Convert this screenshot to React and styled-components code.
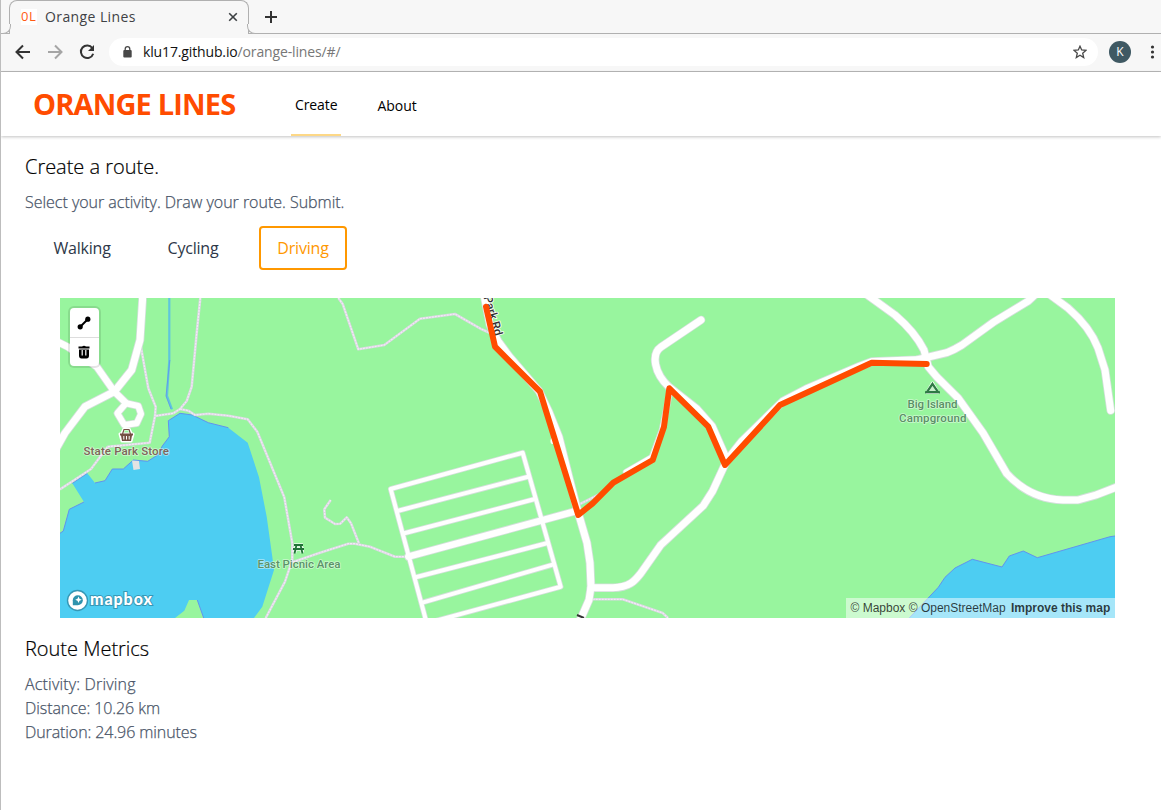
import React from "react";
import styled, { createGlobalStyle, css } from "styled-components";

const GlobalStyle = createGlobalStyle`
  * { box-sizing: border-box; }
  html, body { margin: 0; padding: 0; background: #fff; }
  body { font-family: "Open Sans", "Noto Sans", sans-serif; overflow: hidden; }
  h2, p { margin: 0; }
`;

const Window = styled.div`
  width: 1161px;
  height: 810px;
  border-left: 1px solid #bdbdbd;
  background: #fff;
  overflow: hidden;
`;

const TabStrip = styled.div`
  height: 34px;
  display: flex;
  padding-left: 8px;
  background: #f7f7f7;
  box-shadow: inset 0 -1px 0 #b0b0b0;
`;

const Tab = styled.div`
  position: relative;
  width: 240px;
  height: 34px;
  padding: 0 10px 1px 11px;
  display: flex;
  align-items: center;
  border: 1px solid #b0b0b0;
  border-bottom: 0;
  border-radius: 8px 8px 0 0;
  background: #f7f7f7;

  &::before,
  &::after {
    content: "";
    position: absolute;
    bottom: 0;
    width: 8px;
    height: 9px;
    border: 0 solid #b0b0b0;
    border-bottom-width: 1px;
    background: #f7f7f7;
  }
  &::before {
    left: -8px;
    border-right-width: 1px;
    border-bottom-right-radius: 8px;
  }
  &::after {
    right: -8px;
    border-left-width: 1px;
    border-bottom-left-radius: 8px;
  }
`;

const Favicon = styled.span`
  width: 16px;
  height: 16px;
  background: #fff;
  color: #ff5a14;
  font-size: 13px;
  line-height: 15px;
  letter-spacing: 0.6px;
`;

const TabTitle = styled.span`
  flex: 1;
  margin-left: 8px;
  padding-bottom: 2px;
  font-size: 14px;
  letter-spacing: 0.4px;
  color: #3f4245;
`;

const NewTab = styled.div`
  display: flex;
  align-items: center;
  margin-left: 15px;
`;

const Toolbar = styled.div`
  height: 38px;
  display: flex;
  align-items: center;
  padding: 0 0 1px 14px;
  background: #f7f7f7;
  border-bottom: 1px solid #b9b9b9;
`;

const NavIcon = styled.svg`
  width: 16px;
  height: 16px;
  margin-right: 16px;
  flex: none;
`;

const AddressBar = styled.div`
  width: 989px;
  height: 28px;
  margin-left: -2px;
  padding: 0 11px 0 14px;
  display: flex;
  align-items: center;
  border-radius: 14px;
  background: #fff;
`;

const Url = styled.span`
  flex: 1;
  margin-left: 11px;
  padding-bottom: 2px;
  font-size: 14px;
  letter-spacing: -0.14px;
  color: #111;
  span { color: #777; }
`;

const Avatar = styled.div`
  width: 22px;
  height: 22px;
  margin: 0 18px 0 11px;
  border-radius: 50%;
  background: #3f5963;
  color: #fff;
  font-size: 12px;
  line-height: 22px;
  text-align: center;
`;

const Header = styled.header`
  height: 64px;
  display: flex;
  padding-left: 32px;
  background: #fff;
  box-shadow: 0 1px 3px rgba(0, 0, 0, 0.24);
`;

const Brand = styled.div`
  width: 258px;
  font-size: 29px;
  font-weight: 700;
  line-height: 64px;
  letter-spacing: -0.84px;
  color: #ff4c00;
`;

const NavLink = styled.a`
  height: 64px;
  padding: 0 4px;
  margin-right: 32px;
  line-height: ${(p) => (p.$active ? 66 : 68)}px;
  font-size: 14px;
  letter-spacing: ${(p) => (p.$active ? "-0.1px" : "-0.05px")};
  color: #000;
  border-bottom: 2px solid ${(p) => (p.$active ? "#fdd887" : "transparent")};
`;

const Page = styled.main`
  padding: 15px 24px 0;
`;

const Heading = styled.h2`
  margin-bottom: 7px;
  font-size: 20px;
  font-weight: 300;
  line-height: 32px;
  letter-spacing: -0.02px;
  -webkit-text-stroke: 0.2px currentColor;
  color: #000;
`;

const Text = styled.p`
  font-size: 16px;
  font-weight: 300;
  line-height: 24px;
  letter-spacing: ${(p) => p.$tracking}px;
  -webkit-text-stroke: 0.25px currentColor;
  color: #4a5568;
`;

const Activities = styled.div`
  display: flex;
  gap: 26px;
  margin: 12px 0 28px 10px;
`;

const Activity = styled.button`
  width: ${(p) => p.$width}px;
  height: 44px;
  padding: 0;
  border: 2px solid transparent;
  border-radius: 4px;
  background: none;
  font: 400 16px "Open Sans", "Noto Sans", sans-serif;
  letter-spacing: -0.2px;
  color: #2d3748;
  ${(p) =>
    p.$selected &&
    css`
      margin-left: 2px;
      border-color: #ff9800;
      color: #ff9800;
    `}
`;

const MapFrame = styled.div`
  position: relative;
  width: 1055px;
  height: 320px;
  margin: 0 0 15px 35px;
  overflow: hidden;
`;

const MapCanvas = styled.svg`
  display: block;
  width: 1055px;
  height: 320px;
`;

const Controls = styled.div`
  position: absolute;
  left: 10px;
  top: 10px;
  width: 29px;
  border-radius: 4px;
  background: #fff;
  box-shadow: 0 0 0 2px rgba(0, 0, 0, 0.1);
`;

const Control = styled.div`
  height: 29px;
  padding-right: 1px;
  display: flex;
  align-items: center;
  justify-content: center;
  & + & { border-top: 1px solid #ddd; }
`;

const Attribution = styled.div`
  position: absolute;
  right: 0;
  bottom: 0;
  width: 269px;
  height: 20px;
  padding-left: 4.5px;
  background: rgba(255, 255, 255, 0.5);
  font: 12px/20px "Liberation Sans", Arial, sans-serif;
  color: rgba(0, 0, 0, 0.75);
  white-space: nowrap;
  b { margin-left: 2px; }
`;

const ROADS = [
  ["M142.5 290V300L140 340L131.7 370L114.3 391.7L85 406.7L65 433L56 449", 7],
  ["M52 339L68 347L96.7 366.7L114.3 391.7L126 403", 6.5],
  ["M126 403.3L138.3 406L141 414L136.7 423.3L124.3 425L117.3 413.3Z", 6],
  ["M428 628L390.7 489L522.7 452.7L560.7 586.7L424 624", 4],
  ["M398.3 510.7L528.3 476.7M404.3 533.3L534 499.3M415.7 577.3L546.7 543.3M423.3 602.3L552.7 564.7", 4],
  ["M408.3 556.7L578 510.5", 6.5],
  ["M483 290L490 325L498 341L509 356L539 391L549 412L559 437L569 477L578 512L587 543L590 563L591 587L589 600L582 616L578 624", 7],
  ["M591 587.7H613C631 587.5 636 579 641 573L660.7 545L703.3 505.7L712.3 491.7L727 460", 7],
  ["M701 320L661 347C651 354 654 373 669 387L697 409L712 426L727 460L742 441L783 401L806 389L860 366L872 361.5L916.7 359.8L946.7 352.7Q954 350 962 345L993.3 322.3L1028.3 301L1038 292", 7],
  ["M670 391L662 430L652 457L626 472", 5],
  ["M866 294L895 315Q915 332 924 350L928.3 366.7L936.7 376.7L958.3 398.3L983.3 433.3L1006.7 473.5Q1030 499 1063 500H1078L1096 495L1118 486.5", 7],
  ["M1049 294L1068.3 308.3Q1090 327 1098 348L1105 370L1110.7 410.5", 7],
];

const PATHS = [
  "M200.3 298L196.7 333L191.7 386.7L186.7 401L180 409L173.3 413.3L155 416",
  "M180 409L188.3 410.7L195 415L208.3 413.7L228.3 415.7L247.7 419.3L257.3 431.7L284.3 497.3L292.3 543.3V560L285 581.7L265.7 618",
  "M141 347.3L148.3 388.3L155.7 406.7L155 416L149.7 442.7L107.7 446.7L91 469L74.3 480L60 489.3",
  "M293 562L320 552.7L348.3 543.7H355L370 546.7L395 556.7H408",
  "M330.7 500L324.3 509.3L325 517.7L335 524L340.3 523.7L346.7 517.3L351 523.3L359 543.5",
  "M338.3 298L342.7 304L358.3 349.3L384.3 345L420 318.7L455 314L481.7 329.3L490 333",
  "M592.7 599.3H622.7L662.7 613L668 618",
  "M578 505L602 493",
];

const ROUTE =
  "M486 306.7L495 346.7L540 391.7L578.3 515L592.7 503.3L613.3 482.7L652.7 460L664 426.7L669.3 388.3L708.3 426.7L725 465L780 405L871.7 362.7L926.7 364";

const Label = styled.text`
  font-family: Roboto, sans-serif;
  font-size: ${(p) => p.$size || 11.5}px;
  font-weight: 500;
  fill: ${(p) => p.$color};
  stroke: ${(p) => p.$halo || "rgba(255,255,255,0.5)"};
  stroke-width: 1.6px;
  stroke-linejoin: round;
  paint-order: stroke;
`;

function RouteMap() {
  return (
    <MapCanvas viewBox="60 298 1055 320">
      <rect x="60" y="298" width="1055" height="320" fill="#98f59e" />
      <path
        fill="#4dcdf2"
        d="M180 413.3L168.3 420.7L169.3 436.7L162.3 446L157.7 455L147.7 461.3L133.3 460L123.3 469H112.3L105 480.7L95 483L87.3 473.3L72.3 483.3L84 502L69.3 509.3L63.3 531L60 533.3V618H175L184.3 610.7L189 600H197.3L203.7 618H254L262.3 606.7L274 570L272.3 556.7L266.7 516.7L259 477.3L247.7 442.7L228.3 427.7L208.3 422.7L192.3 415Z"
      />
      <path
        fill="#4dcdf2"
        d="M909.3 618L938.3 587.3L945 577.3L955 568L972.3 559.3L1002 567L1009.3 556L1023.3 551L1037.3 557.7L1110 536.7L1115 536V618Z"
      />
      <path
        fill="none"
        stroke="#6193ee"
        d="M228.3 427.7L208.3 422.7L192.3 415L180 413.3L168.3 420.7L169.3 436.7L162.3 446L157.7 455L147.7 461.3L133.3 460L123.3 469H112.3L105 480.7L95 483M87.3 473.3L72.3 483.3M84 502L69.3 509.3L63.3 531L60 533.3M197.3 600L203.7 618M909.3 618L938.3 587.3L945 577.3L955 568L972.3 559.3L1002 567L1009.3 556L1023.3 551L1037.3 557.7L1110 536.7L1115 536"
      />
      <g fill="none">
        <path d="M169.3 298V360L167 396L172 409.3" stroke="#5fc6dc" strokeWidth="2.2" />
        <path d="M169.8 360L166 396L171 409" stroke="#6193ee" strokeWidth="0.8" />
        {PATHS.map((d) => (
          <path key={d} d={d} stroke="#dad7e2" strokeWidth="2.6" strokeLinejoin="round" />
        ))}
        {PATHS.map((d) => (
          <path key={d} d={d} stroke="#f3ecf6" strokeWidth="1.2" strokeDasharray="2 1" />
        ))}
        <g strokeLinecap="round" strokeLinejoin="round">
          {ROADS.map(([d, w]) => (
            <path key={d} d={d} stroke="#d3dfda" strokeWidth={w + 1.6} />
          ))}
          {ROADS.map(([d, w]) => (
            <path key={d} d={d} stroke="#fff" strokeWidth={w} />
          ))}
          <path d="M552.5 440V442" stroke="#fff" strokeWidth="4" />
        </g>
      </g>
      <path d="M132 460.5L139 461L140 469L133.5 470Z" fill="#e3e3e3" />
      <Label $size={12} $color="#333" $halo="#fff" textLength="41" transform="translate(483.5 297) rotate(74)">
        Park Rd
      </Label>
      <path d="M577 615L584 618" stroke="#333" strokeWidth="2" />
      <path d={ROUTE} fill="none" stroke="#ff4c00" strokeWidth="6" strokeLinecap="round" strokeLinejoin="round" />

      <g fill="none" stroke="#fff" strokeWidth="3" strokeLinejoin="round">
        <path d="M120 434H133L131 441H122ZM122 433L124 429H129L131 433" />
        <path d="M927 392.5L932.5 383L938 392.5Z" />
      </g>
      <path d="M122.5 434L124 429.5H129L130.5 434" fill="none" stroke="#745044" strokeWidth="1.2" />
      <path d="M120 433.5H133V435.5H132L131 441H122L121 435.5H120Z" fill="#745044" />
      <path d="M123.8 436V439.5M126.5 436V439.5M129.2 436V439.5" stroke="#fff" strokeWidth="1" />
      <path d="M932.5 383.8L938 392H927Z" fill="#c9efcc" stroke="#2f7a45" strokeWidth="2.2" />
      <path d="M925 392.3H940" stroke="#2f7a45" strokeWidth="2.2" />
      <path
        d="M294 545H303M293 549H304M296.5 545L294.5 553M300.5 545L302.5 553"
        fill="none"
        stroke="#eafbed"
        strokeWidth="3.5"
      />
      <path
        d="M294 545H303M293 549H304M296.5 545L294.5 553.5M300.5 545L302.5 553.5"
        fill="none"
        stroke="#217238"
        strokeWidth="1.8"
      />

      <Label x="83.5" y="455" textLength="85.5" $color="#7d6459">State Park Store</Label>
      <Label x="257.5" y="568" textLength="83" $color="#5c9268">East Picnic Area</Label>
      <Label x="907.5" y="408" textLength="50" $color="#5a8f66">Big Island</Label>
      <Label x="899" y="422" textLength="67.5" $color="#5a8f66">Campground</Label>

      <circle cx="77.5" cy="600.5" r="10" fill="#fff" stroke="#3698b6" strokeWidth="1.4" />
      <path d="M72.8 605.2V600.2A5 5 0 1 1 77.8 605.2Z" fill="#2f93ad" />
      <path d="M78.5 596.5L79.5 598.8L81.8 599.8L79.5 600.8L78.5 603.1L77.5 600.8L75.2 599.8L77.5 598.8Z" fill="#fff" />
      <text
        x="90"
        y="605"
        textLength="62"
        fontFamily="Lato, sans-serif"
        fontSize="16"
        fontWeight="900"
        fill="#fff"
        stroke="#3698b6"
        strokeWidth="2"
        paintOrder="stroke"
      >
        mapbox
      </text>
    </MapCanvas>
  );
}

export default function App() {
  return (
    <>
      <GlobalStyle />
      <Window>
        <TabStrip>
          <Tab>
            <Favicon>0L</Favicon>
            <TabTitle>Orange Lines</TabTitle>
            <svg width="10" height="10" viewBox="0 0 10 10">
              <path d="M1.2 1.2L8.8 8.8M8.8 1.2L1.2 8.8" stroke="#3c4043" strokeWidth="1.6" />
            </svg>
          </Tab>
          <NewTab>
            <svg width="14" height="14" viewBox="0 0 14 14">
              <path d="M7 1V13M1 7H13" stroke="#333" strokeWidth="2" />
            </svg>
          </NewTab>
        </TabStrip>
        <Toolbar>
          <NavIcon viewBox="0 0 16 16">
            <path d="M15 8H2M8 1.5L1.5 8L8 14.5" fill="none" stroke="#333" strokeWidth="2" />
          </NavIcon>
          <NavIcon viewBox="0 0 16 16">
            <path d="M1 8H14M8 1.5L14.5 8L8 14.5" fill="none" stroke="#a5a5a5" strokeWidth="2" />
          </NavIcon>
          <NavIcon viewBox="0 0 16 16">
            <path d="M13.3 4A6.3 6.3 0 1 0 14.2 9.7" fill="none" stroke="#333" strokeWidth="2" />
            <path d="M15 1V7H9Z" fill="#333" />
          </NavIcon>
          <AddressBar>
            <svg width="9" height="12" viewBox="0 0 9 12">
              <path d="M2.2 5V3A2.3 2.3 0 0 1 6.8 3V5" fill="none" stroke="#484848" strokeWidth="1.3" />
              <rect x="0.3" y="4" width="8.4" height="7.5" rx="1" fill="#484848" />
            </svg>
            <Url>
              klu17.github.io<span>/orange-lines/#/</span>
            </Url>
            <svg width="14" height="14" viewBox="0 0 14 14">
              <path
                d="M7 1.2L8.7 5L12.9 5.4L9.7 8.2L10.7 12.6L7 10.3L3.3 12.6L4.3 8.2L1.1 5.4L5.3 5Z"
                fill="none"
                stroke="#484848"
                strokeWidth="1.3"
              />
            </svg>
          </AddressBar>
          <Avatar>K</Avatar>
          <svg width="7" height="14" viewBox="0 0 7 14" fill="#333">
            <circle cx="3.5" cy="2" r="1.6" />
            <circle cx="3.5" cy="7" r="1.6" />
            <circle cx="3.5" cy="12" r="1.6" />
          </svg>
        </Toolbar>
        <Header>
          <Brand>ORANGE LINES</Brand>
          <NavLink $active>Create</NavLink>
          <NavLink>About</NavLink>
        </Header>
        <Page>
          <Heading>Create a route.</Heading>
          <Text $tracking={-0.02}>Select your activity. Draw your route. Submit.</Text>
          <Activities>
            <Activity $width={94}>Walking</Activity>
            <Activity $width={76}>Cycling</Activity>
            <Activity $width={88} $selected>Driving</Activity>
          </Activities>
          <MapFrame>
            <RouteMap />
            <Controls>
              <Control>
                <svg width="14" height="14" viewBox="0 0 14 14">
                  <path d="M3.5 10.5L10.5 3.5" stroke="#000" strokeWidth="2" />
                  <circle cx="3.2" cy="10.8" r="2.6" />
                  <circle cx="10.8" cy="3.2" r="2.6" />
                </svg>
              </Control>
              <Control>
                <svg width="14" height="14" viewBox="0 0 14 14">
                  <path d="M5 1.5Q7 0 9 1.5H12.5V3.5H1.5V1.5ZM2 4.5H12V10.5Q12 13.5 9.5 13.5H4.5Q2 13.5 2 10.5Z" />
                  <path d="M5.2 5V10.5M8.8 5V10.5" stroke="#fff" strokeWidth="1.2" />
                </svg>
              </Control>
            </Controls>
            <Attribution>
              © Mapbox © OpenStreetMap <b>Improve this map</b>
            </Attribution>
          </MapFrame>
          <Heading>Route Metrics</Heading>
          <Text $tracking={0.18}>Activity: Driving</Text>
          <Text $tracking={-0.08}>Distance: 10.26 km</Text>
          <Text $tracking={-0.09}>Duration: 24.96 minutes</Text>
        </Page>
      </Window>
    </>
  );
}
